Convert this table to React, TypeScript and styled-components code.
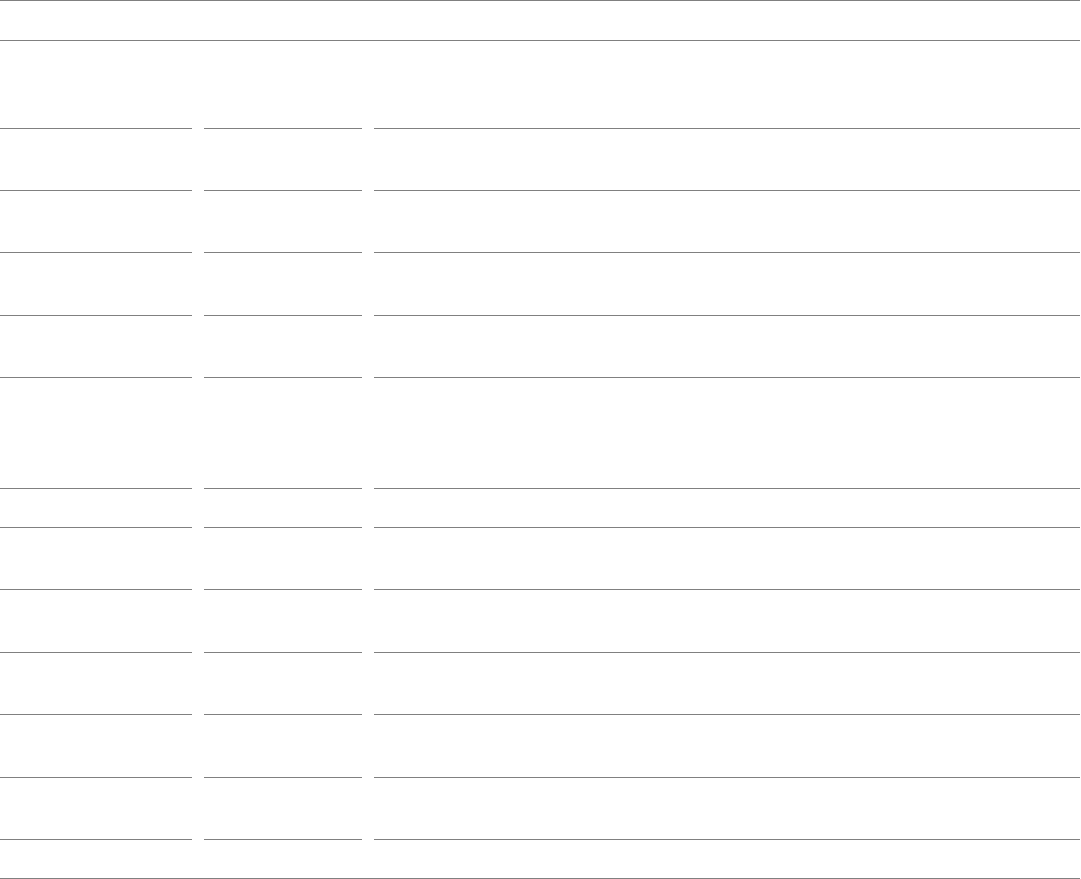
import styled, { createGlobalStyle } from 'styled-components'

const LINE = '#808080'

// heights of each form row (line sits on the bottom edge)
const ROWS = [88, 62, 62, 63, 62, 111, 39, 62, 63, 62, 63, 62]

const GlobalStyle = createGlobalStyle`
  html, body {
    margin: 0;
    padding: 0;
    background: #fff;
    font-family: "Liberation Sans", Arial, sans-serif;
  }
`

const Page = styled.div`
  width: 1080px;
  display: flex;
  flex-direction: column;
`

const TopBar = styled.div`
  box-sizing: border-box;
  height: 41px;
  border-top: 1px solid ${LINE};
  border-bottom: 1px solid ${LINE};
`

const Row = styled.div<{ $h: number }>`
  display: grid;
  grid-template-columns: 192px 158px 1fr;
  column-gap: 12px;
  height: ${(p) => p.$h}px;
`

const Cell = styled.div`
  box-sizing: border-box;
  border-bottom: 1px solid ${LINE};
`

const Footer = styled.div`
  box-sizing: border-box;
  height: 39px;
  border-bottom: 1px solid ${LINE};
`

function App() {
  return (
    <>
      <GlobalStyle />
      <Page>
        <TopBar />
        {ROWS.map((h, i) => (
          <Row key={i} $h={h}>
            <Cell />
            <Cell />
            <Cell />
          </Row>
        ))}
        <Footer />
      </Page>
    </>
  )
}

export default App
